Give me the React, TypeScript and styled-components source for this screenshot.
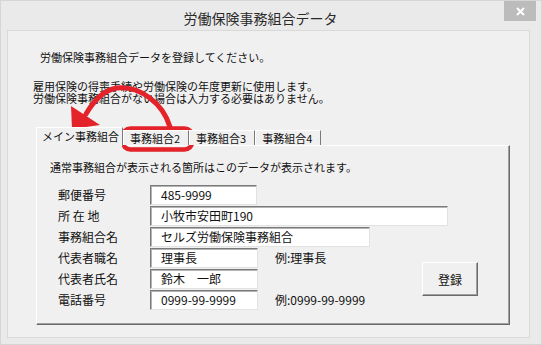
import React from "react";
import styled, { createGlobalStyle } from "styled-components";

const GlobalStyle = createGlobalStyle`
  html, body {
    margin: 0;
    padding: 0;
    background: #eaeaea;
  }
  body {
    font-family: "Noto Sans CJK JP", "Noto Sans", sans-serif;
    color: #111;
  }
`;

const Window = styled.div`
  position: relative;
  width: 542px;
  height: 345px;
  box-sizing: border-box;
  background: #eaeaea;
  border: 1px solid #d6d6d6;
  display: flex;
  flex-direction: column;
`;

const TitleBar = styled.div`
  display: flex;
  align-items: flex-start;
  height: 29px;
  padding-right: 5px;
`;

const Title = styled.div`
  flex: 1;
  text-align: center;
  padding-left: 16px;
  margin-top: 9px;
  font-size: 14px;
  line-height: 16px;
  color: #2a2a2a;
`;

const CloseButton = styled.div`
  width: 32px;
  height: 20px;
  background: #bcbcbc;
  display: flex;
  align-items: center;
  justify-content: center;
`;

const Client = styled.div`
  flex: 1;
  margin: 0 11px 6px 6px;
  box-sizing: border-box;
  background: #f0f0f0;
  border: 1px solid #d9d9d9;
  padding-top: 20px;
`;

const Intro = styled.p`
  margin: 0 0 0 32px;
  font-size: 11px;
  line-height: 13px;
`;

const Note = styled.p`
  margin: 17px 0 0 25px;
  font-size: 11px;
  line-height: 11.5px;
`;

const Tabs = styled.div`
  margin: 23px 0 0 28px;
  width: 474px;
`;

const TabStrip = styled.div`
  display: flex;
  align-items: flex-end;
  height: 18px;
  position: relative;
  z-index: 1;
`;

const Tab = styled.div<{ active?: boolean }>`
  box-sizing: border-box;
  font-size: 11px;
  white-space: nowrap;
  background: #f0f0f0;
  border-top: 1px solid #fff;
  border-left: 1px solid #fff;
  border-right: 1px solid #7a7a7a;
  height: ${({ active }) => (active ? "19px" : "15px")};
  line-height: ${({ active }) => (active ? "17px" : "14px")};
  padding: ${({ active }) => (active ? "0 3px 0 5px" : "0 8px 0 6px")};
  margin-bottom: ${({ active }) => (active ? "-1px" : "0")};
`;

const Panel = styled.div`
  box-sizing: border-box;
  height: 180px;
  border-top: 1px solid #fff;
  border-left: 1px solid #fff;
  border-right: 1px solid #6a6a6a;
  border-bottom: 1px solid #6a6a6a;
  box-shadow: inset -1px -1px 0 #a0a0a0;
  padding: 15px 0 0 13px;
`;

const Description = styled.p`
  margin: 0;
  font-size: 11px;
  line-height: 13px;
`;

const Form = styled.div`
  margin: 11px 0 0 8px;
  display: grid;
  grid-template-columns: 92px 108px 164px 56px;
  grid-auto-rows: 20px;
  row-gap: 1px;
`;

const Label = styled.div`
  grid-column: 1;
  font-size: 12px;
  line-height: 20px;
  white-space: pre;
`;

const Field = styled.div<{ span?: number; w: number }>`
  grid-column: 2 / span ${({ span }) => span || 1};
  width: ${({ w }) => w}px;
  box-sizing: border-box;
  background: #fff;
  border: 1px solid;
  border-color: #7a7a7a #e2e2e2 #e2e2e2 #7a7a7a;
  box-shadow: inset 1px 1px 0 #b4b4b4;
  padding-left: 10px;
  font-size: 12px;
  line-height: 17px;
  white-space: pre;
`;

const Example = styled.div`
  grid-column: 3;
  padding-left: 17px;
  font-size: 12px;
  line-height: 20px;
`;

const RegisterButton = styled.button`
  grid-column: 4;
  grid-row: 4 / span 3;
  align-self: center;
  height: 34px;
  margin: 0;
  padding: 0;
  background: #f0f0f0;
  border: 1px solid;
  border-color: #fff #6a6a6a #6a6a6a #fff;
  box-shadow: inset -1px -1px 0 #a0a0a0;
  font-family: inherit;
  font-size: 12px;
  color: #111;
`;

const Annotation = styled.svg`
  position: absolute;
  top: -1px;
  left: -1px;
  pointer-events: none;
`;

const RED = "#e3222a";

export default function App() {
  return (
    <>
      <GlobalStyle />
      <Window>
        <TitleBar>
          <Title>労働保険事務組合データ</Title>
          <CloseButton>
            <svg width="9" height="9" viewBox="0 0 9 9">
              <path d="M1 1L8 8M8 1L1 8" stroke="#fff" strokeWidth="2" />
            </svg>
          </CloseButton>
        </TitleBar>
        <Client>
          <Intro>労働保険事務組合データを登録してください。</Intro>
          <Note>
            雇用保険の得喪手続や労働保険の年度更新に使用します。
            <br />
            労働保険事務組合がない場合は入力する必要はありません。
          </Note>
          <Tabs>
            <TabStrip>
              <Tab active>メイン事務組合</Tab>
              <Tab>事務組合2</Tab>
              <Tab>事務組合3</Tab>
              <Tab>事務組合4</Tab>
            </TabStrip>
            <Panel>
              <Description>
                通常事務組合が表示される箇所はこのデータが表示されます。
              </Description>
              <Form>
                <Label>郵便番号</Label>
                <Field w={107}>485-9999</Field>
                <Label>所 在 地</Label>
                <Field w={298} span={3}>小牧市安田町190</Field>
                <Label>事務組合名</Label>
                <Field w={220} span={3}>セルズ労働保険事務組合</Field>
                <Label>代表者職名</Label>
                <Field w={108}>理事長</Field>
                <Example>例:理事長</Example>
                <Label>代表者氏名</Label>
                <Field w={108}>鈴木　一郎</Field>
                <Label>電話番号</Label>
                <Field w={108}>0999-99-9999</Field>
                <Example>例:0999-99-9999</Example>
                <RegisterButton>登録</RegisterButton>
              </Form>
            </Panel>
          </Tabs>
        </Client>
        <Annotation width="542" height="345" viewBox="0 0 542 345">
          <path
            d="M170 127 C163 103 140 86 117 88 C103 90 93 102 86 114"
            fill="none"
            stroke={RED}
            strokeWidth="5"
            strokeLinecap="round"
          />
          <polygon points="71,106 72,129 100,125" fill={RED} />
          <rect
            x="122.5"
            y="128.5"
            width="70"
            height="21"
            rx="8"
            fill="none"
            stroke={RED}
            strokeWidth="4.5"
          />
        </Annotation>
      </Window>
    </>
  );
}
